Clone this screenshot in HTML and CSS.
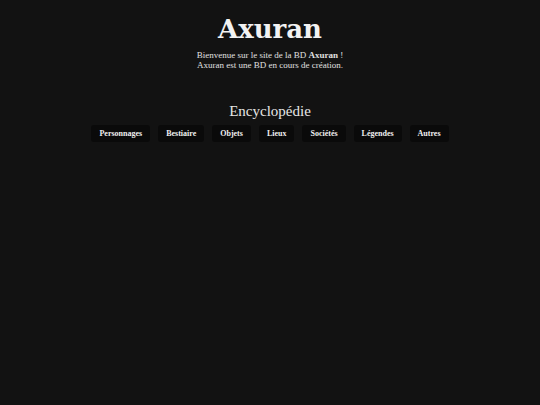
FILE: index.html
```html
<!DOCTYPE html>
<html lang="fr">
<head>
<meta charset="utf-8">
<link rel="stylesheet" href="styles.css">
</head>
<body>
<header class="hero">
  <h1 class="title">Axuran</h1>
  <p class="intro">Bienvenue sur le site de la BD <strong>Axuran</strong> !<br>Axuran est une BD en cours de création.</p>
</header>
<section class="encyclo">
  <h2 class="encyclo-title">Encyclopédie</h2>
  <nav class="menu">
    <a class="btn">Personnages</a>
    <a class="btn">Bestiaire</a>
    <a class="btn">Objets</a>
    <a class="btn">Lieux</a>
    <a class="btn">Sociétés</a>
    <a class="btn">Légendes</a>
    <a class="btn">Autres</a>
  </nav>
</section>
</body>
</html>
```
FILE: styles.css
```css
html, body {
  margin: 0;
  padding: 0;
  background: #121212;
  color: #e6e6e6;
  font-family: "Liberation Serif", "Times New Roman", serif;
}
body {
  height: 405px;
  text-align: center;
}
.hero {
  padding-top: 14px;
}
.title {
  margin: 0;
  font-family: "DejaVu Serif", Georgia, serif;
  font-size: 26px;
  line-height: 30px;
  font-weight: bold;
  color: #f2f2f2;
}
.intro {
  margin: 7px 0 0;
  font-size: 9px;
  line-height: 9.5px;
  color: #e0e0e0;
}
.encyclo {
  margin-top: 32px;
}
.encyclo-title {
  margin: 0;
  font-size: 15px;
  line-height: 18px;
  font-weight: normal;
  color: #e6e6e6;
}
.menu {
  margin-top: 5px;
  display: flex;
  justify-content: center;
  gap: 8px;
}
.btn {
  display: block;
  background: #0a0a0a;
  color: #f0f0f0;
  font-size: 8px;
  font-weight: bold;
  line-height: 17px;
  padding: 0 8px;
  border-radius: 3px;
}
```
